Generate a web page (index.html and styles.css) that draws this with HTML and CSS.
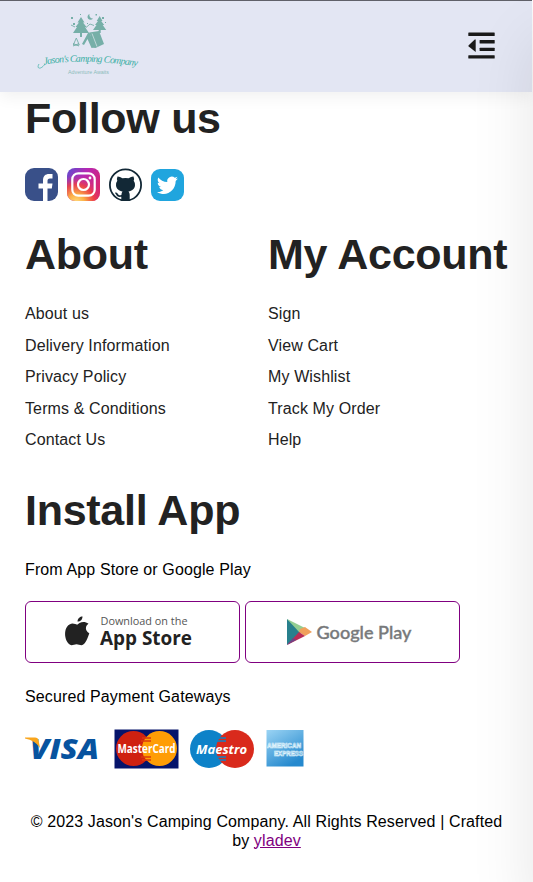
FILE: index.html
```html
<!DOCTYPE html>
<html lang="en">
<head>
<meta charset="utf-8">
<title>Jason's Camping Company</title>
<link rel="stylesheet" href="styles.css">
</head>
<body>
<header class="header">
  <svg class="logo" width="110" height="72" viewBox="0 0 110 72">
    <g fill="#76afa8">
      <path d="M46 12l-3.500 5.500h1.500l-3.500 4.500h1.500l-4 6h7v4h2v-4h7l-4-6h1.500l-3.500-4.500h1.500z"/>
      <path d="M64.700 11l-3 5h1.300l-3 4h1.500l-3.500 5h5.700v3h2v-3h5.500l-3.500-5h1.500l-3-4h1.300z"/>
      <path d="M47 39l6-11 1.500-.5 5.500 15-3.500.5-4-9-3.500 6z"/>
      <path d="M54.500 27.500l9.500-1.500 5 13-8.500 4-2-.5z"/>
      <path d="M54.500 9a3 3 0 1 0 3.500 4.500 3.500 3.500 0 0 1-3.500-4.500z"/>
      <path d="M36 12h2v2h-2zM38 18h2v2h-2zM45 9h1v1h-1zM60.500 9h1.500v1.500h-1.500zM67 12h2v2h-2zM52 18h1v1h-1zM70 17h1v1h-1z"/>
    </g>
    <path d="M36 20l4 2M50.500 23l4.500-4 4 1.500M41.300 33l-3 7h6zM38 41l6-2.500M38 38.500l6 2.500" fill="none" stroke="#76afa8" stroke-width=".9"/>
    <path d="M57 28.500l5 13" stroke="#dce7ed" stroke-width=".7"/>
    <path id="arc" d="M9 59.500Q48 53 104 61.500" fill="none"/>
    <text class="logo-name" textLength="94" lengthAdjust="spacing"><textPath href="#arc" textLength="94" lengthAdjust="spacing">Jason's Camping Company</textPath></text>
    <path d="M10 59C6 65 1 64 4 59" fill="none" stroke="#3aaea4" stroke-width=".7"/>
    <text class="logo-tag" x="33" y="69" textLength="41" lengthAdjust="spacingAndGlyphs">Adventure Awaits</text>
  </svg>
  <svg class="menu" width="28" height="28" viewBox="0 0 28 28" fill="#1a1a1a">
    <rect x=".3" y=".5" width="26.4" height="3.4" rx=".5"/><rect x="11.6" y="8.1" width="15.1" height="3.4" rx=".5"/><rect x="11.6" y="15.7" width="15.1" height="3.4" rx=".5"/><rect x=".3" y="23.2" width="26.4" height="3.4" rx=".5"/>
    <path d="M7.700 7.400v12.500L.7 14.500q-.6-.7 0-1.300L6.800 7.400z"/>
  </svg>
</header>
<main class="content">
  <section>
    <h4>Follow us</h4>
    <div class="social">
      <svg width="33" height="33" viewBox="0 0 33 33"><rect width="33" height="33" rx="9" fill="#395089"/><path d="M18 33V20.500h-4.500v-5H18V12.500C18 8 20.500 6 24 6h3.500v4.500H25c-2 0-2.500 1-2.500 2.500v2.500h5l-.7 5h-4.300V33z" fill="#fff"/></svg>
      <svg width="33" height="33" viewBox="0 0 33 33">
        <defs><linearGradient id="ig" x1="0" y1="0" x2="1" y2=".65"><stop stop-color="#5b4ed0"/><stop offset=".45" stop-color="#b528b4"/><stop offset="1" stop-color="#dc2466"/></linearGradient><radialGradient id="ig2" cx=".28" cy="1.05" r=".85"><stop stop-color="#ffdc80"/><stop offset=".3" stop-color="#fcaf45"/><stop offset=".65" stop-color="#f0433f" stop-opacity=".85"/><stop offset="1" stop-color="#c52ca0" stop-opacity="0"/></radialGradient></defs>
        <rect width="33" height="33" rx="8" fill="url(#ig)"/><rect width="33" height="33" rx="8" fill="url(#ig2)"/><rect x="5.300" y="5.300" width="22.400" height="22.400" rx="6" fill="none" stroke="#fff" stroke-width="2.200"/><circle cx="16.500" cy="16.500" r="5.500" fill="none" stroke="#fff" stroke-width="2.200"/><circle cx="23" cy="10" r="1.400" fill="#fff"/></svg>
      <svg width="33" height="33" viewBox="0 0 33 33"><circle cx="16.500" cy="17" r="15.600" fill="#fff" stroke="#122836" stroke-width="1.800"/><path d="M8.500 8.500q2-.2 5 1.800 3-.6 6 0 3-2 5-1.800 1 2.200.2 4.300 1.500 2 1.300 4.500c-.3 4-3 5.500-6.500 6.200q1.200 1.200 1.200 3.200V32h-8.400v-3.200c-3.500.6-4.300-.9-5.200-2.400-.5-.9-1.200-1.200-1-1.700.8-.7 2 0 2.700 1.100 1 1.600 2 1.700 3.600 1.200q.1-2.100 1.100-3.500C10 22.800 7.300 21.300 7 17.300q-.2-2.500 1.300-4.500-.8-2.100.2-4.300z" fill="#122836"/></svg>
      <svg width="33" height="33" viewBox="0 0 33 33"><rect y="1" width="33" height="32" rx="9" fill="#20a5de"/><path d="M27 10.500l-2.300.7 1.800-2.400-2.700 1a4.500 4.500 0 0 0-7.500 4.200c-3.800-.2-7-2-9-4.600-1.200 2.200-.5 4.500 1.400 5.800l-2-.5c0 2.200 1.500 3.800 3.500 4.300l-2 .1c.6 1.800 2.100 3 4 3.100-2 1.500-4 2-6.200 1.700C15 29.500 24.500 23 24.700 13z" fill="#fff"/></svg>
    </div>
  </section>
  <div class="columns">
    <section><h4>About</h4><ul><li>About us</li><li>Delivery Information</li><li>Privacy Policy</li><li>Terms &amp; Conditions</li><li>Contact Us</li></ul></section>
    <section><h4>My Account</h4><ul><li>Sign</li><li>View Cart</li><li>My Wishlist</li><li>Track My Order</li><li>Help</li></ul></section>
  </div>
  <section class="install">
    <h4>Install App</h4>
    <p>From App Store or Google Play</p>
    <div class="stores">
      <svg class="store" viewBox="0 0 213 60">
        <g fill="#222"><path d="M53.500 21c3-1.400 6-1.400 9 .8-3.500 2.200-3.600 7 .8 9.400-1.200 3.600-3.800 11.800-7.800 12-2 0-3-1-5-1s-3 1-5 1c-7-1.800-9-17-2-20.800 4-2 6 .5 8 .2z"/><path d="M51.500 19.500c0-3 2.500-5 5-5 0 3-2 5-5 5z"/></g>
        <text class="dl" x="74.500" y="23" textLength="87" lengthAdjust="spacingAndGlyphs">Download on the</text>
        <text class="as" x="74" y="42.500" textLength="92" lengthAdjust="spacingAndGlyphs">App Store</text>
      </svg>
      <svg class="store" viewBox="0 0 213 60">
        <path d="M41 17l15 12-15 14z" fill="#28808d"/><path d="M41 17l18 9-5 5z" fill="#93ce92"/><path d="M54 27l5-2 7 5-7 4-6-4z" fill="#f0a05b"/><path d="M41 43l12-13 6 4z" fill="#b92d55"/><path d="M41 43l6-7 3 2z" fill="#704384"/>
        <text class="gp" x="70.500" y="36.500" textLength="95" lengthAdjust="spacingAndGlyphs">Google Play</text>
      </svg>
    </div>
    <p class="secured">Secured Payment Gateways</p>
    <svg class="pay" width="280" height="40" viewBox="0 0 280 40">
      <defs><linearGradient id="am" x1="0" y1="0" x2=".6" y2="1"><stop stop-color="#9bd4f4"/><stop offset="1" stop-color="#2589ce"/></linearGradient></defs>
      <text class="visa" x="5" y="30" textLength="69" lengthAdjust="spacingAndGlyphs">VISA</text>
      <path d="M0 8.500h10q3 0 3.500 2.500l1.500 8Q10 11 0 9.500z" fill="#f9a51d"/>
      <rect x="89.500" y=".5" width="64" height="39" fill="#06146b"/><circle cx="108.500" cy="19.500" r="17.500" fill="#cf2110"/><circle cx="134.500" cy="19.500" r="17.500" fill="#ff9d05"/>
      <path d="M117 9h9M116 12h10M116 28h10M117 31h9" stroke="#dc3a0b" stroke-width="1.600"/>
      <text class="mc" x="92.500" y="24" textLength="58" lengthAdjust="spacingAndGlyphs">MasterCard</text>
      <circle cx="184" cy="20" r="19" fill="#0d82c8"/><circle cx="210" cy="20" r="19" fill="#d92a1c"/>
      <path d="M193 9h8M192 12h9M192 28h9M193 31h8" stroke="#0d82c8" stroke-width="1.600"/>
      <text class="ms" x="171" y="24.500" textLength="51" lengthAdjust="spacingAndGlyphs">Maestro</text>
      <rect x="241.500" y="1" width="37" height="36.500" fill="url(#am)"/>
      <text class="ax" x="242" y="19" textLength="34" lengthAdjust="spacingAndGlyphs">AMERICAN</text><text class="ax" x="249" y="26.500" textLength="29" lengthAdjust="spacingAndGlyphs">EXPRESS</text>
    </svg>
  </section>
  <p class="copyright">© 2023 Jason's Camping Company. All Rights Reserved | Crafted by <a href="#">yladev</a></p>
</main>
<aside class="drawer"></aside>
</body>
</html>
```
FILE: styles.css
```css
* { box-sizing: border-box; margin: 0; padding: 0; }
body { height: 882px; overflow: hidden; font-family: "Liberation Sans", Arial, sans-serif; font-size: 16px; color: #000; background: #fff; letter-spacing: .12px; }
svg { letter-spacing: 0; }
.header { display: flex; justify-content: space-between; align-items: flex-start; width: 532px; height: 92px; padding: 4px 36px 0 35px; background: #e3e6f3; border-top: 1px solid #606169; box-shadow: 0 5px 15px rgba(0, 0, 0, .06); }
.menu { margin-top: 27px; }
.logo-name { font: italic 10px "Liberation Serif", serif; fill: #3aaea4; }
.logo-tag { font: 5.500px "Liberation Sans", sans-serif; fill: #8dbcbb; }
.content { padding: 0 25px; }
h4 { height: 52px; font-size: 43px; line-height: 53px; letter-spacing: -.28px; color: #222; white-space: nowrap; }
.social { display: flex; gap: 9px; margin-top: 24px; }
.columns { display: grid; grid-template-columns: 243px 240px; margin-top: 27px; }
ul { list-style: none; margin-top: 18px; }
li { height: 31.500px; line-height: 31.500px; color: #222; }
.install { margin-top: 28px; }
.install p { margin-top: 24px; line-height: 20px; }
.stores { display: flex; gap: 5px; margin-top: 21px; }
.store { width: 215px; height: 62px; border: 1px solid purple; border-radius: 6px; background: #fff; }
.dl { font: 11px "Open Sans", sans-serif; fill: #555; }
.as { font: 700 19px "Open Sans", sans-serif; fill: #222; }
.gp { font: 500 18px Lato, sans-serif; fill: #77797b; stroke: #77797b; stroke-width: .4; }
.pay { display: block; margin-top: 22px; }
.visa { font: italic 800 28px "Open Sans", sans-serif; fill: #07539f; }
.mc { font: bold 12px "Open Sans", sans-serif; fill: #fff; }
.ms { font: italic bold 13px "Open Sans", sans-serif; fill: #fff; }
.ax { font: bold 6.500px "Liberation Sans", sans-serif; fill: none; stroke: #e1f4fc; stroke-width: .6; }
.copyright { margin-top: 43px; line-height: 19px; text-align: center; }
.copyright a { color: purple; }
.drawer { position: fixed; top: 0; left: 533px; width: 300px; height: 100vh; background: #e3e6f3; box-shadow: 0 40px 60px rgba(0, 0, 0, .1); }
```
